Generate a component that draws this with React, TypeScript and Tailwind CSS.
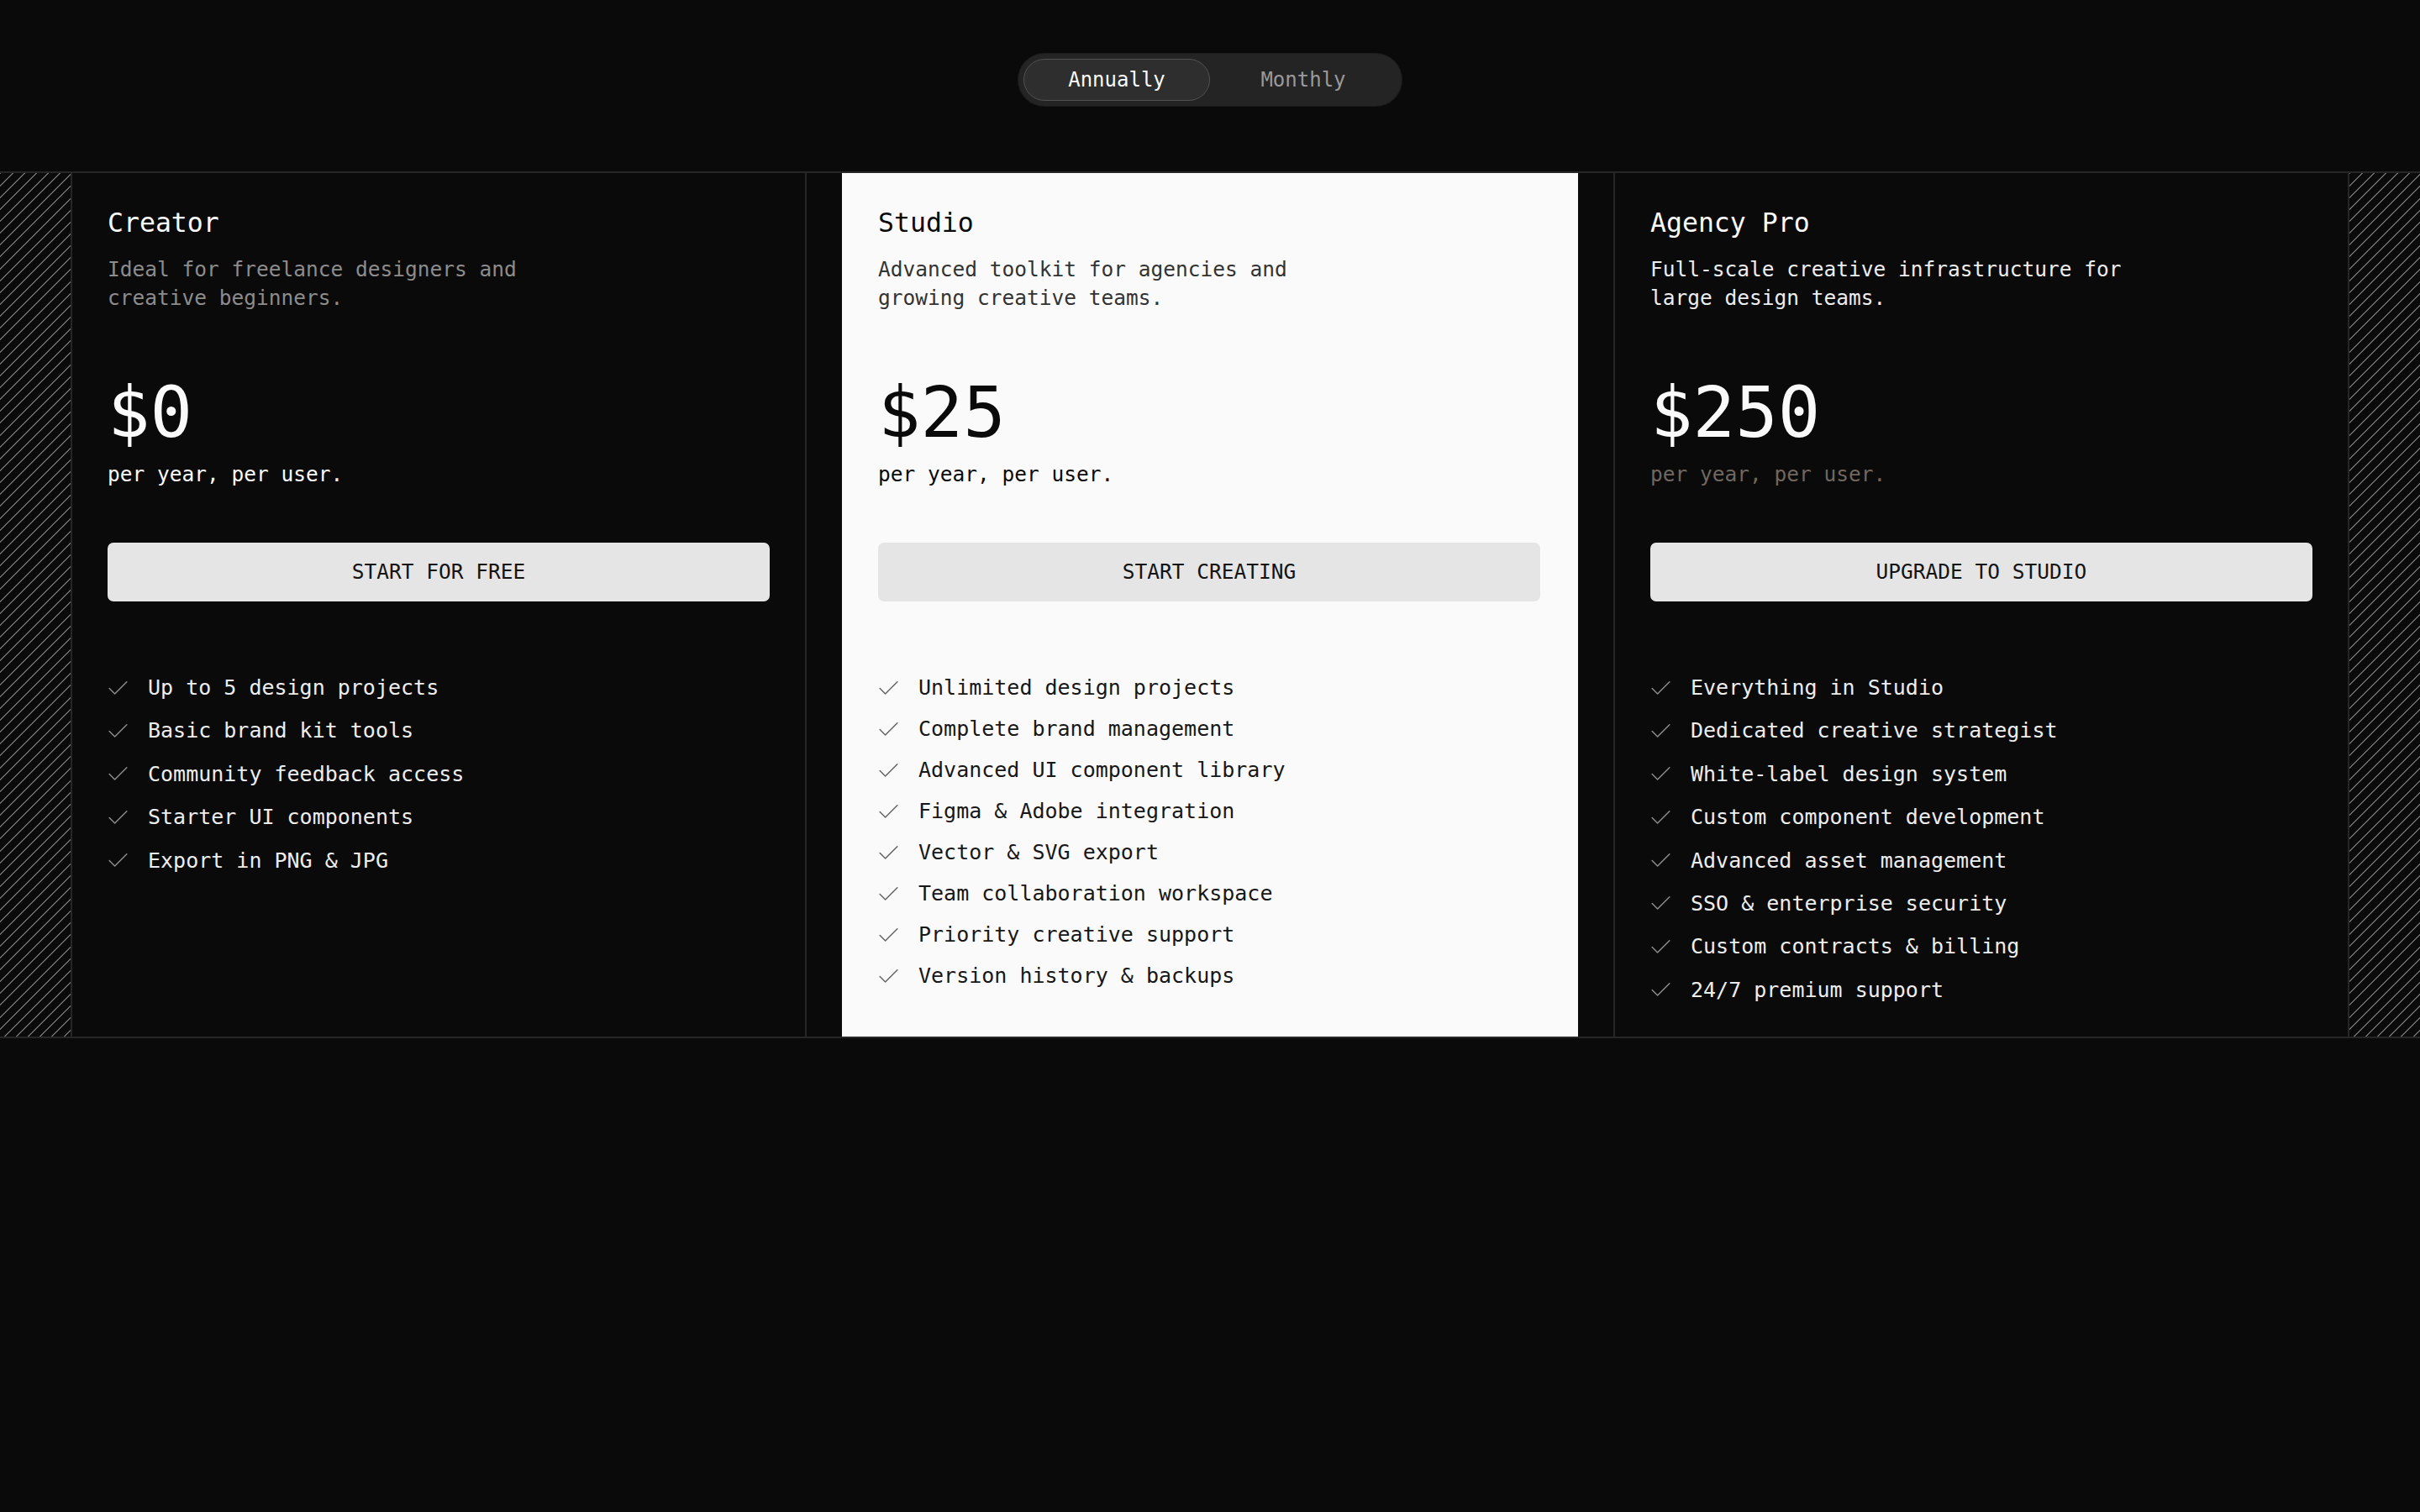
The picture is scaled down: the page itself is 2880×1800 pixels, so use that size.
import React, { useState } from "react";
import { Check } from "lucide-react";

type Plan = {
  name: string;
  description: string;
  price: string;
  cta: string;
  features: string[];
};

const plans: Plan[] = [
  {
    name: "Creator",
    description: "Ideal for freelance designers and creative beginners.",
    price: "$0",
    cta: "Start for free",
    features: [
      "Up to 5 design projects",
      "Basic brand kit tools",
      "Community feedback access",
      "Starter UI components",
      "Export in PNG & JPG",
    ],
  },
  {
    name: "Studio",
    description: "Advanced toolkit for agencies and growing creative teams.",
    price: "$25",
    cta: "Start creating",
    features: [
      "Unlimited design projects",
      "Complete brand management",
      "Advanced UI component library",
      "Figma & Adobe integration",
      "Vector & SVG export",
      "Team collaboration workspace",
      "Priority creative support",
      "Version history & backups",
    ],
  },
  {
    name: "Agency Pro",
    description: "Full-scale creative infrastructure for large design teams.",
    price: "$250",
    cta: "Upgrade to studio",
    features: [
      "Everything in Studio",
      "Dedicated creative strategist",
      "White-label design system",
      "Custom component development",
      "Advanced asset management",
      "SSO & enterprise security",
      "Custom contracts & billing",
      "24/7 premium support",
    ],
  },
];

const hatch =
  "bg-[repeating-linear-gradient(135deg,#6a6a6a_0px,#6a6a6a_1.4px,transparent_1.4px,transparent_10px)]";

const PlanColumn: React.FC<{ plan: Plan; variant: "free" | "featured" | "pro" }> = ({
  plan,
  variant,
}) => {
  const featured = variant === "featured";

  return (
    <div
      className={`flex flex-col pt-[44px] pb-[38px] ${
        featured ? "bg-[#fafafa] pl-[43px] pr-[45px]" : "px-[42px]"
      }`}
    >
      <h3
        className={`text-[31.5px] leading-[30px] font-normal ${
          featured ? "text-[#0a0a0a]" : "text-[#fafafa]"
        }`}
      >
        {plan.name}
      </h3>
      <p
        className={`mt-[24px] max-w-[585px] text-[24.5px] leading-[34px] ${
          variant === "free" ? "text-[#8c8c8c]" : featured ? "text-[#333333]" : "text-[#ededed]"
        }`}
      >
        {plan.description}
      </p>

      {/* Price */}
      <div
        className={`mt-[77px] text-[84px] leading-[84px] ${
          featured ? "text-[#0a0a0a]" : "text-[#fafafa]"
        }`}
      >
        {plan.price}
      </div>
      <div
        className={`mt-[15px] text-[24.5px] leading-[34px] ${
          variant === "pro" ? "text-[#6f6760]" : featured ? "text-[#0a0a0a]" : "text-[#fafafa]"
        }`}
      >
        per year, per user.
      </div>

      <button
        type="button"
        className="mt-[64px] h-[70px] w-full rounded-[7px] bg-[#e5e5e5] text-[24.5px] uppercase text-[#141414]"
      >
        {plan.cta}
      </button>

      {/* Features */}
      <ul className={`mt-[86px] flex flex-col ${featured ? "gap-[15px]" : "gap-[17.4px]"}`}>
        {plan.features.map((f) => (
          <li key={f} className="flex items-center gap-[20px] text-[25px] leading-[34px]">
            <Check
              size={31}
              strokeWidth={1.2}
              className={`-ml-[3px] shrink-0 ${featured ? "text-[#666666]" : "text-[#8a8a8a]"}`}
            />
            <span className={featured ? "text-[#171717]" : "text-[#ededed]"}>{f}</span>
          </li>
        ))}
      </ul>
    </div>
  );
};

const App: React.FC = () => {
  const [billing, setBilling] = useState<"annually" | "monthly">("annually");

  return (
    <div className="min-h-screen bg-[#0a0a0a] font-[family-name:'DejaVu_Sans_Mono',monospace]">
      {/* Billing toggle */}
      <div className="flex justify-center pt-[64px] pb-[78px]">
        <div className="flex rounded-full bg-[#242424] p-[6px] ring-1 ring-[#1c1c1c]">
          <button
            type="button"
            onClick={() => setBilling("annually")}
            className={`h-[50px] w-[222px] rounded-full text-[24px] ${
              billing === "annually"
                ? "border-[1.5px] border-[#525252] bg-[#2e2e2e] text-[#fafafa]"
                : "text-[#9a9a9a]"
            }`}
          >
            Annually
          </button>
          <button
            type="button"
            onClick={() => setBilling("monthly")}
            className={`h-[50px] w-[222px] rounded-full text-[24px] ${
              billing === "monthly"
                ? "border-[1.5px] border-[#525252] bg-[#2e2e2e] text-[#fafafa]"
                : "text-[#9a9a9a]"
            }`}
          >
            Monthly
          </button>
        </div>
      </div>

      {/* Plans */}
      <div className="flex border-y-2 border-[#262626]">
        <div className={`w-[86px] shrink-0 border-r-2 border-[#262626] ${hatch}`} />
        <div className="w-[874px] shrink-0 border-r-2 border-[#262626]">
          <PlanColumn plan={plans[0]} variant="free" />
        </div>
        <div className="flex w-[960px] shrink-0 flex-col px-[42px]">
          <div className="flex-1 bg-[#fafafa]">
            <PlanColumn plan={plans[1]} variant="featured" />
          </div>
        </div>
        <div className="w-[874px] shrink-0 border-l-2 border-[#262626]">
          <PlanColumn plan={plans[2]} variant="pro" />
        </div>
        <div className={`w-[86px] shrink-0 border-l-2 border-[#262626] ${hatch}`} />
      </div>
    </div>
  );
};

export default App;
